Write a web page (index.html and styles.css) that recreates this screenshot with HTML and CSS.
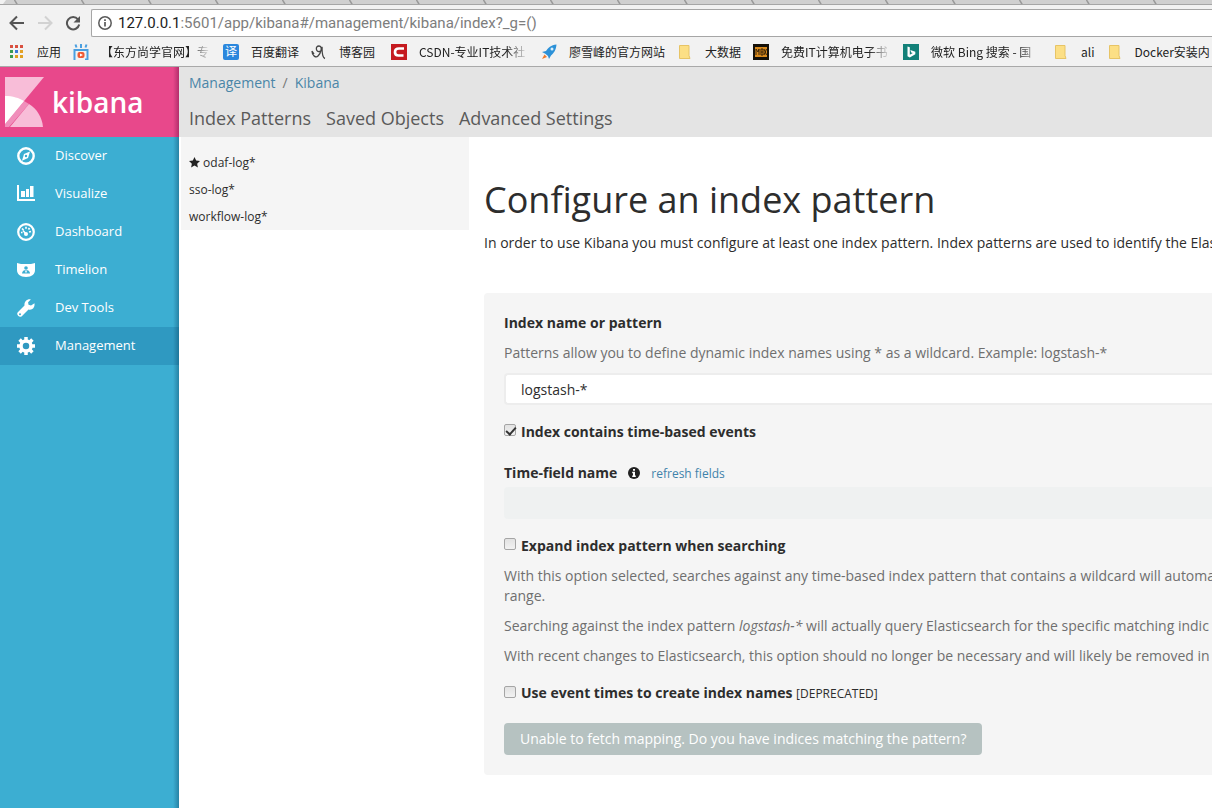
FILE: index.html
```html
<!DOCTYPE html>
<html lang="en">
<head>
<meta charset="utf-8">
<title>Kibana</title>
<link rel="stylesheet" href="styles.css">
</head>
<body>
<header class="browser">
  <svg class="tabs" height="5" aria-hidden="true">
    <defs><pattern id="tab" width="67" height="5" patternUnits="userSpaceOnUse" x="14"><rect width="67" height="5" fill="#d0d0d0"/><path d="M0.500 0l3 5" stroke="#999" stroke-width="1.500"/></pattern></defs>
    <rect width="100%" height="5" fill="url(#tab)"/><path d="M0 0h6L3 4H0z" fill="#f2f2f2"/><path d="M0 4.500h3000" stroke="#a6a6a6"/>
  </svg>
  <div class="toolbar">
    <button class="tool" aria-label="Back"><svg width="16" height="16" viewBox="0 0 16 16"><path d="M15 8H2M8 1.500L1.500 8 8 14.500" fill="none" stroke="#555" stroke-width="2"/></svg></button>
    <button class="tool" aria-label="Forward"><svg width="16" height="16" viewBox="0 0 16 16"><path d="M1 8h13M8 1.500L14.500 8 8 14.500" fill="none" stroke="#d2d2d2" stroke-width="2"/></svg></button>
    <button class="tool" aria-label="Reload"><svg width="16" height="16" viewBox="0 0 16 16"><path d="M13 4.300A6.200 6.200 0 1 0 14.200 9.500" fill="none" stroke="#555" stroke-width="2"/><path d="M15 1v6.500H8.500z" fill="#555"/></svg></button>
    <div class="address">
      <svg width="14" height="14" viewBox="0 0 14 14"><circle cx="7" cy="7" r="6.200" fill="none" stroke="#5a5a5a" stroke-width="1.500"/><path d="M7 6v4.500M7 3.300v1.700" stroke="#5a5a5a" stroke-width="1.700"/></svg>
      <span class="url"><span class="host">127.0.0.1</span>:5601/app/kibana#/management/kibana/index?_g=()</span>
    </div>
  </div>
  <nav class="bookmarks" aria-label="Bookmarks">
    <a href="#"><svg width="16" height="16" viewBox="0 0 16 16"><path d="M1 1h3v3H1zM6 1h3v3H6zM11 1h3v3h-3z" fill="#d9503f"/><path d="M1 6h3v3H1z" fill="#3a9a52"/><path d="M6 6h3v3H6z" fill="#3b79d8"/><path d="M11 6h3v3h-3z" fill="#e3a226"/><path d="M1 11h3v3H1z" fill="#3a9a52"/><path d="M6 11h3v3H6zM11 11h3v3h-3z" fill="#e0a020"/></svg><span>应用</span></a>
    <a href="#" class="long"><svg width="16" height="16" viewBox="0 0 16 16"><path d="M1.500 16V6h13v9.500h-2.500M8 0v4M2.500.5l1 3M13.500.5l-1 3" fill="none" stroke="#4a9fe0" stroke-width="2"/><rect x="4.500" y="8" width="7" height="6" rx="2" fill="#ee5a34"/><path d="M7 9.500l3 1.500-3 1.500z" fill="#fff"/></svg><span>【东方尚学官网】专</span></a>
    <a href="#"><svg width="16" height="16" viewBox="0 0 16 16"><rect width="16" height="16" rx="2" fill="#2b87dd"/><text x="2" y="12" font-size="12" fill="#fff" class="cjk">译</text></svg><span>百度翻译</span></a>
    <a href="#" class="blog"><svg width="16" height="16" viewBox="0 0 16 16"><path d="M1 7c0 5 4 7 6 5 3-3 5-10 1-10S5 8 8 7.500 11.500 4 11 3c0 5 1 11 3 11.500M1 7l2 3" fill="none" stroke="#444" stroke-width="1.300"/></svg><span>博客园</span></a>
    <a href="#" class="long"><svg width="16" height="16" viewBox="0 0 16 16"><rect width="16" height="16" fill="#c51a1f"/><path d="M13 4.500H8C5.500 4.500 4 6 4 8.200s1.300 3.300 3.500 3.300h5" fill="none" stroke="#fff" stroke-width="2.700"/></svg><span>CSDN-专业IT技术社</span></a>
    <a href="#"><svg width="16" height="16" viewBox="0 0 16 16"><path d="M15.500.5C10 1 7 4 5 7L1 8l3 1.500L7 12l1 3 2-3.500C13 9 15 6 15.500.5z" fill="#2c91d8"/><circle cx="11" cy="5" r="1.500" fill="#d8effc"/><path d="M3.500 10.500L1 15l5-2z" fill="#ef7a2c"/></svg><span>廖雪峰的官方网站</span></a>
    <a href="#"><svg width="16" height="16" viewBox="0 0 16 16"><path d="M2.500 1.500h9.500v10l1 3H2.500z" fill="#fcdf85" stroke="#e7c466"/></svg><span>大数据</span></a>
    <a href="#" class="long"><svg width="16" height="16" viewBox="0 0 16 16"><rect width="16" height="16" fill="#151008"/><rect x="2" y="3" width="12" height="10" fill="#d98a1c"/><path d="M3 11V5l2 3 1-3v6M8 5v6h2V8H8m2 0V5H8M11 5l2.500 6m0-6L11 11" fill="none" stroke="#3b2508"/></svg><span>免费IT计算机电子书</span></a>
    <a href="#" class="long"><svg width="16" height="16" viewBox="0 0 16 16"><rect width="16" height="16" fill="#128078"/><path d="M4.500 2.500l2.300.8v7.500l3-1.700-1.600-.7-.9-2.400 5 1.800v2.400l-5.500 3.300-2.300-1.300z" fill="#fff"/></svg><span>微软 Bing 搜索 - 国</span></a>
    <a href="#"><svg width="16" height="16" viewBox="0 0 16 16"><path d="M2.500 1.500h9.500v10l1 3H2.500z" fill="#fcdf85" stroke="#e7c466"/></svg><span>ali</span></a>
    <a href="#"><svg width="16" height="16" viewBox="0 0 16 16"><path d="M2.500 1.500h9.500v10l1 3H2.500z" fill="#fcdf85" stroke="#e7c466"/></svg><span>Docker安装内</span></a>
  </nav>
</header>
<div class="app">
  <aside class="sidebar">
    <a class="logo" href="#">
      <svg width="39" height="50" viewBox="0 0 39 50"><path d="M0 0h39L0 47z" fill="#f8bdd8"/><path d="M19 24l5 3L4 50H0v-3z" fill="#f08fbb"/><path d="M0 19c8 0 14 2 19 5L0 47z" fill="#fff"/><path d="M24 27c8 5 13 13 14 23H5z" fill="#f8bdd8"/></svg>
      <span>kibana</span>
    </a>
    <nav class="menu">
      <a href="#"><svg width="18" height="18" viewBox="0 0 18 18"><circle cx="9" cy="9" r="7.700" fill="none" stroke="#fff" stroke-width="2.400"/><path d="M13 4.500l-2 6.500-6 2.700L7 7z" fill="#fff"/><circle cx="9" cy="9" r="1.200" fill="#3caed2"/></svg><span>Discover</span></a>
      <a href="#"><svg width="18" height="18" viewBox="0 0 18 18"><path d="M1 0v15h17" fill="none" stroke="#fff" stroke-width="2"/><path d="M4 6h4v6H4zM9 4h3v8H9zM13 1h3.500v11H13z" fill="#fff"/></svg><span>Visualize</span></a>
      <a href="#"><svg width="18" height="18" viewBox="0 0 18 18"><circle cx="9" cy="9" r="7.800" fill="none" stroke="#fff" stroke-width="2.200"/><circle cx="9" cy="11" r="2" fill="#fff"/><path d="M9 11L6 7.500" stroke="#fff" stroke-width="1.500"/><path d="M9 3.700v2M12.500 5l-1 1.500M14 8.500l-2 .5M4 9.500h1.500M5 5.500l1.500 1.500" stroke="#fff" stroke-width="1.700"/></svg><span>Dashboard</span></a>
      <a href="#"><svg width="18" height="18" viewBox="0 0 18 18"><path d="M0 2l4 1h10l4-1v7c0 4-3 7-9 7S0 13 0 9z" fill="#fff"/><circle cx="9" cy="7" r="1.800" fill="#3caed2"/><path d="M5 12.500c0-2.500 2-3.500 4-3.500s4 1 4 3.500z" fill="#3caed2"/><path d="M9 9.500v2" stroke="#fff" stroke-width="1.500"/></svg><span>Timelion</span></a>
      <a href="#"><svg width="18" height="18" viewBox="0 0 18 18"><path d="M17.500 4.200L14 6.500l-2.500-.8-.4-2.500L13.800.5C11-.5 7 2 7.500 6.500L.8 13.200c-2 2.200 1.500 6 4 4L11.500 10.500c4 1 6.500-2 6-6.300z" fill="#fff"/><circle cx="3" cy="15.200" r="1" fill="#3caed2"/></svg><span>Dev Tools</span></a>
      <a href="#" class="active"><svg width="18" height="18" viewBox="0 0 18 18"><circle cx="9" cy="9" r="5" fill="none" stroke="#fff" stroke-width="3.500"/><path d="M9 0v4M9 14v4M0 9h4M14 9h4M2.600 2.600l2.800 2.800M12.600 12.600l2.800 2.800M2.600 15.400l2.800-2.800M12.600 5.400l2.800-2.800" stroke="#fff" stroke-width="3.500"/></svg><span>Management</span></a>
    </nav>
  </aside>
  <div class="page">
    <header class="page-head">
      <nav class="crumbs"><a href="#">Management</a><span>/</span><a href="#">Kibana</a></nav>
      <nav class="sections"><a href="#">Index Patterns</a><a href="#">Saved Objects</a><a href="#">Advanced Settings</a></nav>
    </header>
    <div class="columns">
      <ul class="patterns">
        <li><a href="#"><svg width="11" height="11" viewBox="0 0 22 22"><path d="M11 0l3.300 7.200 7.700 1-5.700 5.400L17.800 21 11 17.200 4.200 21l1.500-7.400L0 8.200l7.700-1z" fill="#222"/></svg> odaf-log*</a></li>
        <li><a href="#">sso-log*</a></li>
        <li><a href="#">workflow-log*</a></li>
      </ul>
      <main class="content">
        <h1>Configure an index pattern</h1>
        <p class="intro">In order to use Kibana you must configure at least one index pattern. Index patterns are used to identify the Elas</p>
        <form class="panel">
          <label class="title" for="name">Index name or pattern</label>
          <p>Patterns allow you to define dynamic index names using * as a wildcard. Example: logstash-*</p>
          <input class="field" id="name" type="text" value="logstash-*">
          <div class="check events"><input id="time" type="checkbox" checked><label for="time">Index contains time-based events</label></div>
          <div class="time-row"><label for="timefield">Time-field name</label><svg width="12" height="12" viewBox="0 0 12 12"><circle cx="6" cy="6" r="6" fill="#222"/><path d="M5 2h2v1.700H5zM4.200 4.800H7v3.700h.8V10H4.200V8.500H5V6.200h-.8z" fill="#fff"/></svg><a href="#">refresh fields</a></div>
          <select class="time-field" id="timefield" disabled></select>
          <div class="check expand"><input id="expand" type="checkbox"><label for="expand">Expand index pattern when searching</label></div>
          <p>With this option selected, searches against any time-based index pattern that contains a wildcard will automa<br>range.</p>
          <p>Searching against the index pattern <em>logstash-*</em> will actually query Elasticsearch for the specific matching indic</p>
          <p>With recent changes to Elasticsearch, this option should no longer be necessary and will likely be removed in</p>
          <div class="check names"><input id="names" type="checkbox"><label for="names">Use event times to create index names <small>[DEPRECATED]</small></label></div>
          <button class="submit" type="button" disabled>Unable to fetch mapping. Do you have indices matching the pattern?</button>
        </form>
      </main>
    </div>
  </div>
</div>
</body>
</html>
```
FILE: styles.css
```css
* { box-sizing: border-box; }
body {
  margin: 0;
  min-height: 100vh;
  display: flex;
  flex-direction: column;
  overflow-x: hidden;
  background: #fff;
  color: #2d2d2d;
  font: 14px/20px "Open Sans", "Noto Sans CJK SC", sans-serif;
}
a { color: inherit; text-decoration: none; }
p, h1, ul { margin: 0; padding: 0; }
svg { flex: none; }

.browser { background: #f2f2f2; border-bottom: 1px solid #a9a9a9; }
.tabs { display: block; width: 100%; }
.toolbar { display: flex; align-items: center; padding: 4px 0 0 9px; gap: 12px; }
.tool { display: flex; padding: 0; border: 0; background: none; }
.address {
  flex: 1;
  display: flex;
  align-items: center;
  gap: 6px;
  height: 28px;
  margin-left: -2px;
  padding-left: 6px;
  background: #fff;
  border: 1px solid #a6a6a6;
  border-right: 0;
  border-radius: 2px 0 0 2px;
}
.url { color: #7d7d7d; font: 15px/20px Roboto, sans-serif; white-space: nowrap; }
.host { color: #222; }
.bookmarks {
  display: flex;
  gap: 12px;
  height: 29px;
  padding-left: 9px;
  overflow: hidden;
  color: #222;
  font: 12px/18px "Noto Sans CJK SC", sans-serif;
}
.bookmarks a { flex: none; display: flex; align-items: center; gap: 12px; white-space: nowrap; }
.bookmarks .long { width: 138px; }
.bookmarks .long span { width: 110px; mask-image: linear-gradient(90deg, #000 80%, transparent); }
.bookmarks .blog { width: 68px; }
.cjk { font-family: "Noto Sans CJK SC", sans-serif; }

.app { flex: 1; display: flex; }
.sidebar {
  flex: none;
  width: 179px;
  background: linear-gradient(90deg, transparent 173px, rgba(0, 50, 80, .35)), #3caed2;
  color: #fff;
  font-size: 13px;
}
.logo {
  display: flex;
  align-items: center;
  gap: 8px;
  height: 70px;
  padding-left: 5px;
  background: linear-gradient(90deg, transparent 173px, rgba(80, 0, 50, .35)), #e8488b;
  font: 600 28px/40px "Open Sans", sans-serif;
}
.menu a { display: flex; align-items: center; gap: 20px; height: 38px; padding-left: 17px; }
.menu span { padding-bottom: 2px; }
.menu .active { background: linear-gradient(90deg, transparent 173px, rgba(0, 50, 80, .35)), #2f99c1; }

.page { flex: 1; min-width: 0; }
.page-head { height: 70px; padding: 6px 10px 0; background: #e4e4e4; }
.crumbs { display: flex; gap: 7px; color: #777; }
.crumbs a { color: #4a86a8; }
.sections { display: flex; gap: 15px; padding-top: 12px; color: #5a5a5a; font-size: 18px; line-height: 26px; }
.columns { display: flex; align-items: flex-start; padding-left: 2px; }
.patterns {
  flex: none;
  width: 288px;
  padding: 12px 8px 0;
  background: #f5f5f5;
  list-style: none;
  font-size: 12px;
  line-height: 27px;
}
.patterns svg { vertical-align: -1px; }
.content { flex: 1; min-width: 0; padding: 38px 0 32px 15px; white-space: nowrap; }
h1 { font-size: 36px; font-weight: 400; line-height: 50px; }
.intro { padding-top: 8px; }
.panel {
  display: flex;
  flex-direction: column;
  gap: 10px;
  margin-top: 40px;
  padding: 20px 0 20px 20px;
  background: #f5f5f5;
  border-radius: 4px 0 0 4px;
}
.panel p { color: #6f6f6f; }
.panel label { font-weight: 700; }
.field {
  width: 100%;
  height: 32px;
  padding: 4px 15px;
  border: 2px solid #ededed;
  border-right: 0;
  border-radius: 4px 0 0 4px;
  background: #fff;
  color: #2d2d2d;
  font: inherit;
}
.check { display: flex; align-items: center; gap: 5px; }
.check input {
  appearance: none;
  width: 12px;
  height: 12px;
  margin: 0 0 4px;
  border: 1px solid #a5a5a5;
  border-radius: 2px;
  background: linear-gradient(#e2e2e2, #f2f2f2);
}
.check input:checked::before {
  content: "";
  display: block;
  width: 8px;
  height: 4px;
  margin: 2px 1px;
  border: solid #333;
  border-width: 0 0 2px 2px;
  rotate: -48deg;
}
.check small { font-size: 12px; font-weight: 400; }
.events { padding-top: 7px; }
.time-row { display: flex; align-items: center; gap: 11px; padding-top: 10px; }
.time-row a { padding-top: 2px; color: #3f83ab; font-size: 12px; }
.time-field {
  appearance: none;
  width: 100%;
  height: 32px;
  margin-top: -7px;
  border: 0;
  border-radius: 4px 0 0 4px;
  background: #ecf0f0;
}
.expand { padding-top: 7px; }
.names { padding-top: 7px; }
.submit {
  align-self: flex-start;
  margin-top: 9px;
  padding: 6px 16px;
  border: 0;
  border-radius: 4px;
  background: #b6c2c1;
  color: #fff;
  font: inherit;
}
```
